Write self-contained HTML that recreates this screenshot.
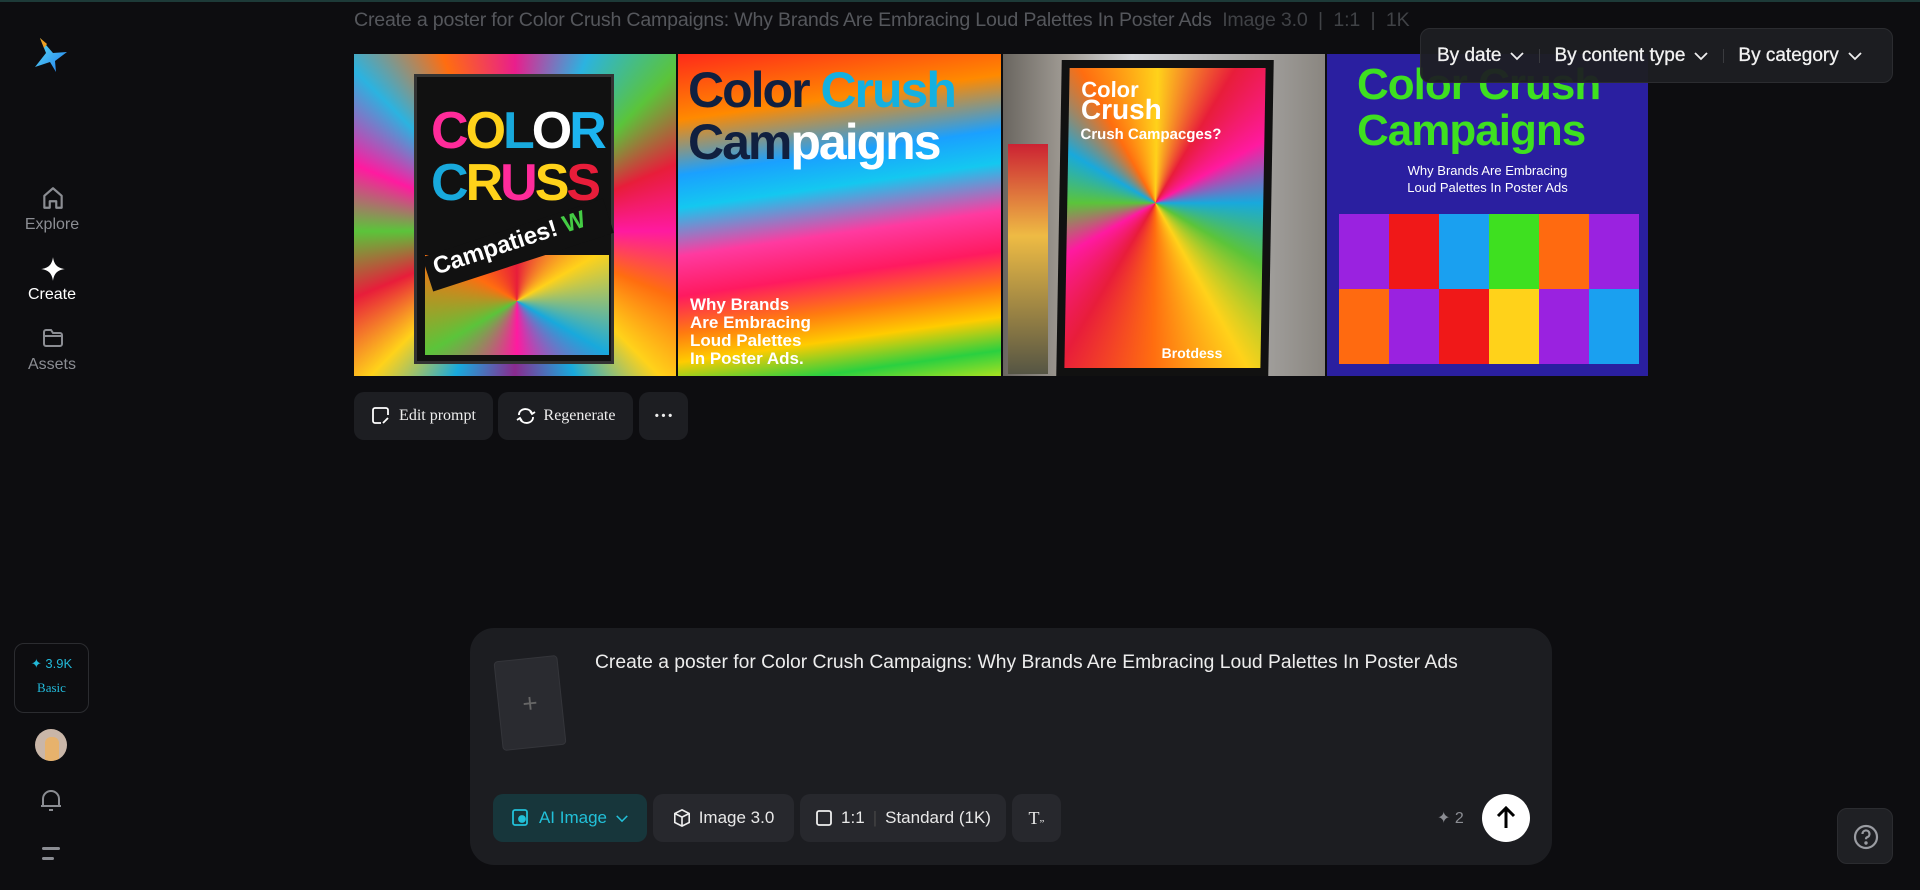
<!DOCTYPE html>
<html><head><meta charset="utf-8"><style>
*{box-sizing:border-box;margin:0;padding:0}
body{width:1920px;height:890px;background:#0d0d10;font-family:"Liberation Sans",sans-serif;color:#fff;overflow:hidden;position:relative}
.top{position:absolute;left:0;top:0;width:1920px;height:2px;background:#1d3a38}
.side{position:absolute;left:0;top:0;width:100px;height:890px;background:#0d0d10}
.nav{position:absolute;left:0;width:104px;text-align:center;font-size:16px;color:#8b8d93}
.hdr{position:absolute;left:354px;top:9px;font-size:19.6px;color:#55575c;white-space:nowrap;letter-spacing:-0.2px}
.img{position:absolute;top:54px;height:322px;overflow:hidden}
.btn{position:absolute;top:392px;height:48px;background:#1d1e22;border-radius:10px;font-family:"Liberation Serif",serif;font-size:16px;color:#eee;display:flex;align-items:center;justify-content:center;gap:8px}
.filter{position:absolute;left:1420px;top:28px;width:473px;height:55px;background:rgba(30,31,35,.95);border:1px solid #2b2c30;border-radius:10px;display:flex;align-items:center;font-size:19px;color:#f2f2f2;padding-left:16px;-webkit-text-stroke:0.3px #f2f2f2}
.filter .s{width:1px;height:14px;background:#3a3b3f;margin:0 14px}
.filter svg{margin-left:8px}
.box{position:absolute;left:470px;top:628px;width:1082px;height:237px;background:#1c1d21;border-radius:24px}
.tb{position:absolute;top:794px;height:48px;background:#27282d;border-radius:10px;display:flex;align-items:center;justify-content:center;gap:8px;font-size:17px;color:#e8e8e8}
</style></head><body>
<div class="side"></div>
<div class="top"></div>
<svg style="position:absolute;left:33px;top:36px" width="38" height="38" viewBox="0 0 38 38"><defs><linearGradient id="lg" x1="0" y1="0" x2="1" y2="1"><stop offset="0" stop-color="#5fe0f0"/><stop offset="1" stop-color="#1f7cf0"/></linearGradient></defs><path d="M7 2 L13 17 L2 31 L17 26 L23 36 L22 25 L34 16 L20 17 Z" fill="url(#lg)"/><path d="M7 2 L11 12 L14 8Z" fill="#f0a020"/></svg>
<svg style="position:absolute;left:40px;top:185px" width="26" height="26" viewBox="0 0 24 24" fill="none" stroke="#8b8d93" stroke-width="2"><path d="M4 21V10L12 3L20 10V21H15V15H9V21Z" stroke-linejoin="round"/></svg>
<div class="nav" style="top:216px">Explore</div>
<svg style="position:absolute;left:40px;top:256px" width="26" height="26" viewBox="0 0 24 24"><path d="M12 1C13 8 16 11 23 12C16 13 13 16 12 23C11 16 8 13 1 12C8 11 11 8 12 1Z" fill="#fff"/></svg>
<div class="nav" style="top:286px;color:#fff">Create</div>
<svg style="position:absolute;left:41px;top:326px" width="24" height="24" viewBox="0 0 24 24" fill="none" stroke="#8b8d93" stroke-width="2"><path d="M3 6a2 2 0 0 1 2-2h5l2 3h7a2 2 0 0 1 2 2v9a2 2 0 0 1-2 2H5a2 2 0 0 1-2-2Z M3 10h18"/></svg>
<div class="nav" style="top:356px">Assets</div>
<div style="position:absolute;left:14px;top:643px;width:75px;height:70px;border:1px solid #2b2c30;border-radius:10px;text-align:center;color:#22b8d8">
<div style="margin-top:12px;font-size:13px">✦ 3.9K</div><div style="margin-top:8px;font-size:13px;font-family:'Liberation Serif',serif">Basic</div></div>
<div style="position:absolute;left:35px;top:729px;width:32px;height:32px;border-radius:50%;background:#c9b6a8;overflow:hidden"><div style="position:absolute;left:10px;top:8px;width:14px;height:24px;background:#e7b26c;border-radius:6px 6px 0 0"></div></div>
<svg style="position:absolute;left:39px;top:787px" width="24" height="26" viewBox="0 0 24 26" fill="none" stroke="#8b8d93" stroke-width="2"><path d="M4 19V12a8 8 0 0 1 16 0v7M2 19h20M10 23h4"/></svg>
<div style="position:absolute;left:42px;top:847px;width:18px;height:3px;background:#8b8d93;border-radius:2px"></div>
<div style="position:absolute;left:42px;top:857px;width:12px;height:3px;background:#8b8d93;border-radius:2px"></div>

<div class="hdr">Create a poster for Color Crush Campaigns: Why Brands Are Embracing Loud Palettes In Poster Ads &nbsp;<span style="color:#404246">Image 3.0 &nbsp;|&nbsp; 1:1 &nbsp;|&nbsp; 1K</span></div>

<div class="img" style="left:354px;width:322px;background:conic-gradient(from 0deg at 50% 55%,#e91e8c,#2bb3e0,#5bc43a,#e81d3a,#ff1aa0,#ff6d10,#ffd21a,#18a9dc,#8a2b8f,#18a9dc,#ffd21a,#e81d3a,#5bc43a,#ff1aa0,#2bb3e0,#ff6d10,#e91e8c)">
<div style="position:absolute;left:60px;top:20px;width:200px;height:290px;background:#111;border:3px solid #333">
<div style="position:absolute;left:8px;top:8px;width:184px;height:270px;background:conic-gradient(from 0deg at 50% 80%,#e81d3a,#ffd21a,#18a9dc,#ff1aa0,#5bc43a,#ff6d10,#e81d3a)"></div>
<div style="position:absolute;left:8px;top:8px;width:184px;height:170px;background:#111"></div>
<div style="position:absolute;left:14px;top:28px;font:900 52px/52px 'Liberation Sans',sans-serif;color:#ff2b9a;letter-spacing:-3px">C<span style="color:#ffd21a">O</span><span style="color:#18a9dc">L</span><span style="color:#fff">O</span><span style="color:#1cb4f0">R</span><br><span style="color:#18a9dc">C</span><span style="color:#ffd21a">R</span><span style="color:#ff2b9a">U</span><span style="color:#ffd21a">S</span><span style="color:#e81d3a">S</span></div>
<div style="position:absolute;left:6px;top:150px;width:190px;height:36px;background:#111;transform:rotate(-18deg);font:700 24px 'Liberation Sans',sans-serif;color:#fff;padding-left:8px">Campaties! <span style="color:#4c4">W</span></div>
</div></div>
<div class="img" style="left:678px;width:323px;background:linear-gradient(172deg,#ff2a1a 0%,#ff8a00 18%,#1aa0ff 33%,#14c8f0 42%,#ff3aa0 55%,#ff1a60 66%,#ff7a10 76%,#ffcc00 84%,#2ad040 93%,#a8e020 100%)">
<div style="position:absolute;left:10px;top:10px;font:700 50px/52px 'Liberation Sans',sans-serif;color:#102040;letter-spacing:-2px;white-space:nowrap">Color <span style="color:#14b0e0">Crush</span><br>Cam<span style="color:#fff">paigns</span></div>
<div style="position:absolute;left:12px;top:242px;font:700 17px/18px 'Liberation Sans',sans-serif;color:#fff">Why Brands<br>Are Embracing<br>Loud Palettes<br>In Poster Ads.</div></div>
<div class="img" style="left:1003px;width:322px;background:linear-gradient(90deg,#6a6660,#a29d96 20%,#d4d6da 40%,#8a8680 100%)">
<div style="position:absolute;left:5px;top:90px;width:40px;height:230px;background:linear-gradient(#c23,#eb4 40%,#554 100%)"></div>
<div style="position:absolute;left:56px;top:6px;width:212px;height:316px;background:#111;transform:skewX(-1deg)">
<div style="position:absolute;left:8px;top:8px;width:196px;height:300px;background:conic-gradient(from 0deg at 45% 45%,#ffd21a,#e81d3a,#ff1aa0,#18a9dc,#5bc43a,#ffd21a,#ff6d10,#e81d3a,#ff1aa0,#5bc43a,#18a9dc,#ff6d10,#ffd21a)"></div>
<div style="position:absolute;left:20px;top:20px;font:700 22px/20px 'Liberation Sans',sans-serif;color:#fff">Color<br><span style="font-size:28px">Crush</span><br><span style="font-size:15px">Crush Campacges?</span></div>
<div style="position:absolute;left:105px;top:285px;font:700 14px 'Liberation Sans',sans-serif;color:#fff">Brotdess</div></div></div>
<div class="img" style="left:1327px;width:321px;background:#2a1fa0">
<div style="position:absolute;left:30px;top:8px;font:700 44px/46px 'Liberation Sans',sans-serif;color:#3ee020;letter-spacing:-1px;white-space:nowrap">Color Crush<br>Campaigns</div>
<div style="position:absolute;left:0;width:321px;top:108px;text-align:center;font:13px/17px 'Liberation Sans',sans-serif;color:#fff">Why Brands Are Embracing<br>Loud Palettes In Poster Ads</div>
<div style="position:absolute;left:12px;top:160px;width:300px;height:150px;display:grid;grid-template-columns:repeat(6,1fr);grid-template-rows:1fr 1fr">
<div style="background:#9a22e0"></div><div style="background:#f01818"></div><div style="background:#1aa0f0"></div><div style="background:#3ee020"></div><div style="background:#ff6a10"></div><div style="background:#9a22e0"></div>
<div style="background:#ff6a10"></div><div style="background:#9a22e0"></div><div style="background:#f01818"></div><div style="background:#ffd21a"></div><div style="background:#9a22e0"></div><div style="background:#1aa0f0"></div></div></div>

<div class="btn" style="left:354px;width:139px"><svg width="20" height="20" viewBox="0 0 20 20" fill="none" stroke="#fff" stroke-width="1.8"><path d="M17 9V4a2 2 0 0 0-2-2H4a2 2 0 0 0-2 2v11a2 2 0 0 0 2 2h6M12 17l5-5"/></svg>Edit prompt</div>
<div class="btn" style="left:498px;width:135px"><svg width="20" height="20" viewBox="0 0 20 20" fill="none" stroke="#fff" stroke-width="1.8"><path d="M3 9a6 5 0 0 1 13-1M17 11a6 5 0 0 1-13 1M14 5l2 3 3-2M6 15l-2-3-3 2"/></svg>Regenerate</div>
<div class="btn" style="left:639px;width:49px;font-size:20px;font-weight:bold">···</div>

<div class="filter">By date<svg width="16" height="10" viewBox="0 0 16 10" fill="none" stroke="#eee" stroke-width="1.8"><path d="M2 2l6 6 6-6"/></svg><div class="s"></div>By content type<svg width="16" height="10" viewBox="0 0 16 10" fill="none" stroke="#eee" stroke-width="1.8"><path d="M2 2l6 6 6-6"/></svg><div class="s"></div>By category<svg width="16" height="10" viewBox="0 0 16 10" fill="none" stroke="#eee" stroke-width="1.8"><path d="M2 2l6 6 6-6"/></svg></div>

<div class="box">
<div style="position:absolute;left:28px;top:30px;width:64px;height:90px;background:#2a2b30;border:1px solid #34353a;border-radius:4px;transform:rotate(-6deg);color:#666;font-size:26px;text-align:center;line-height:88px">+</div>
<div style="position:absolute;left:125px;top:24px;font-size:19.3px;color:#ededed;white-space:nowrap">Create a poster for Color Crush Campaigns: Why Brands Are Embracing Loud Palettes In Poster Ads</div>
<div style="position:absolute;left:967px;top:180px;font-size:16px;color:#8b8d93">✦ 2</div>
<div style="position:absolute;left:1012px;top:166px;width:48px;height:48px;border-radius:50%;background:#fff"><svg width="48" height="48" viewBox="0 0 48 48" fill="none" stroke="#000" stroke-width="3"><path d="M24 34V15M16 22l8-8 8 8"/></svg></div>
</div>
<div class="tb" style="left:493px;width:154px;background:#17363b;color:#22c0d8"><svg width="20" height="20" viewBox="0 0 20 20" fill="none" stroke="#22c0d8" stroke-width="1.8"><rect x="2" y="2" width="14" height="15" rx="2"/><circle cx="11" cy="11" r="3" fill="#22c0d8"/></svg>AI Image<svg width="14" height="9" viewBox="0 0 16 10" fill="none" stroke="#22c0d8" stroke-width="1.8"><path d="M2 2l6 6 6-6"/></svg></div>
<div class="tb" style="left:653px;width:141px"><svg width="18" height="18" viewBox="0 0 20 20" fill="none" stroke="#eee" stroke-width="1.8"><path d="M10 1l8 4v10l-8 4-8-4V5zM2 5l8 4 8-4M10 9v10"/></svg>Image 3.0</div>
<div class="tb" style="left:800px;width:206px"><svg width="18" height="18" viewBox="0 0 18 18" fill="none" stroke="#eee" stroke-width="1.8"><rect x="2" y="2" width="14" height="14" rx="2"/></svg>1:1 <span style="color:#444">|</span> Standard (1K)</div>
<div class="tb" style="left:1012px;width:49px;font-family:'Liberation Serif',serif;font-size:18px">T<span style="font-size:11px;margin-left:-8px">„</span></div>

<div style="position:absolute;left:1837px;top:808px;width:56px;height:56px;background:#1f2024;border:1px solid #2b2c30;border-radius:10px"><svg width="56" height="56" viewBox="0 0 56 56" fill="none" stroke="#9a9ca2" stroke-width="2.2"><circle cx="28" cy="28" r="11"/><path d="M24.5 25a3.5 3.5 0 1 1 4.5 3.3c-1 .4-1 1-1 2"/><circle cx="28" cy="34" r=".6" fill="#9a9ca2"/></svg></div>
</body></html>
